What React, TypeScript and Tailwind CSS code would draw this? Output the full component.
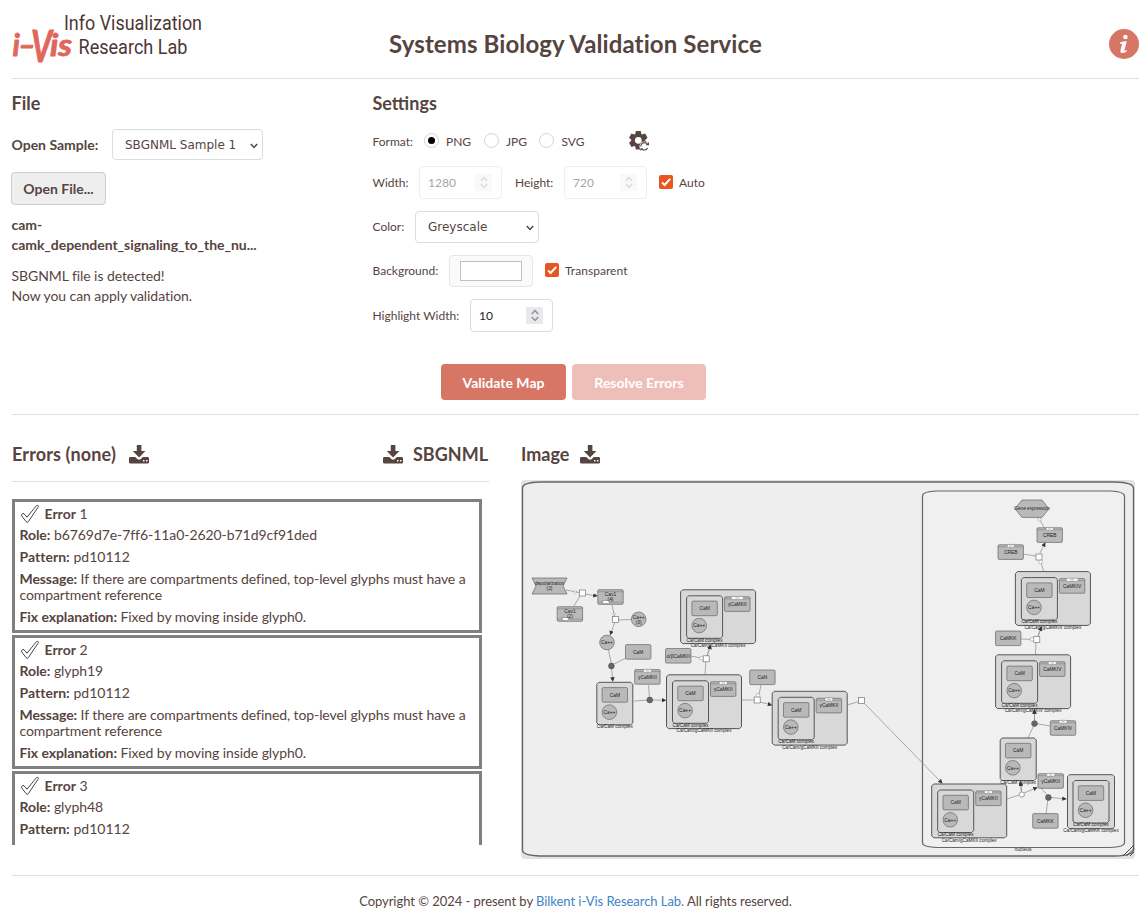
import React from "react";

function Chevron({ className = "" }: { className?: string }) {
  return (
    <svg className={className} width="8" height="6" viewBox="0 0 8 6" fill="none" stroke="currentColor" strokeWidth="1.5">
      <path d="M0.8 1 L4 4.4 L7.2 1" />
    </svg>
  );
}

function Spinner({ dim = false }: { dim?: boolean }) {
  return (
    <span className={`flex h-[17px] w-[17px] flex-col items-center justify-between py-0.5 ${dim ? "bg-[#f9f9f9] text-[#dcdcdf]" : "bg-[#e9e9ed] text-[#8f8f9d]"}`}>
      <Chevron className="rotate-180" />
      <Chevron />
    </span>
  );
}

function NumberField({ value, dim = false }: { value: string; dim?: boolean }) {
  return (
    <div className={`flex h-[33px] w-[83px] items-center justify-between rounded border pr-[9px] pl-2 text-xs ${dim ? "border-[#eeeeee] text-[#a5a5a5]" : "border-[#dcdcdc] text-[#1f1f1f]"}`}>
      <span>{value}</span>
      <Spinner dim={dim} />
    </div>
  );
}

function Radio({ on = false }: { on?: boolean }) {
  return (
    <span className="mb-[3px] flex h-[15px] w-[15px] items-center justify-center rounded-full border border-[#d4d4d5]">
      {on && <span className="h-[7px] w-[7px] rounded-full bg-black" />}
    </span>
  );
}

function Checkbox() {
  return (
    <svg width="14" height="14" viewBox="0 0 14 14" className="mb-0.5 shrink-0">
      <rect width="14" height="14" rx="2" fill="#e95420" />
      <path d="M3 7.4 L5.6 10 L11.2 3.8" fill="none" stroke="#fff" strokeWidth="2" />
    </svg>
  );
}

function DownloadIcon() {
  return (
    <svg width="20" height="19" viewBox="0 0 20 19" fill="#564440">
      <path d="M7.8 0 h4.6 v6 h4 L10.1 12.4 3.8 6 h4z" />
      <path fillRule="evenodd" d="M1.4 12 H6.2 L8.3 14 Q10 15.4 11.8 14 L13.9 12 H18.6 Q20 12 20 13.4 V17.2 Q20 18.6 18.6 18.6 H1.4 Q0 18.6 0 17.2 V13.4 Q0 12 1.4 12z M14 15 v1.6 h1.5 V15z M17 15 v1.6 h1.5 V15z" />
    </svg>
  );
}

function GearIcon() {
  return (
    <svg width="21" height="21" viewBox="0 0 21 21">
      <g fill="#564440">
        {[0, 60, 120].map((a) => (
          <path key={a} d="M6.9 0 H11.7 L12.6 4 V14.6 L11.7 18.6 H6.9 L6 14.6 V4z" transform={`rotate(${a} 9.3 9.3)`} />
        ))}
        <circle cx="9.3" cy="9.3" r="6.8" />
      </g>
      <circle cx="9.3" cy="9.3" r="3.4" fill="#fff" />
      <circle cx="15.5" cy="15.5" r="5" fill="#fff" />
      <path d="M11.7 15.4 A3.8 3.8 0 0 1 18 12.6 M18.6 17 A3.8 3.8 0 0 1 13 18.3" fill="none" stroke="#564440" strokeWidth="1.1" />
      <path d="M16.4 14.2 H20 V11z M11.4 20 V17.2 H14.2z" fill="#564440" />
    </svg>
  );
}

function Logo() {
  return (
    <svg width="200" height="62" viewBox="11 7 200 62" aria-label="i-Vis Info Visualization Research Lab">
      <g fontFamily="Roboto, sans-serif" fontSize="19.5" fill="#4d3633">
        <text x="64" y="30" textLength="138" lengthAdjust="spacingAndGlyphs">Info Visualization</text>
        <text x="78.5" y="53.5" textLength="109" lengthAdjust="spacingAndGlyphs">Research Lab</text>
      </g>
      <g fontFamily="Lato, sans-serif" fontStyle="italic" fontWeight="700" fill="#df675c" stroke="#df675c" strokeWidth="0.9" strokeLinejoin="round">
        <text x="12.5" y="56" fontSize="30">i</text>
        <text x="19" y="54.5" fontSize="29" textLength="16" lengthAdjust="spacingAndGlyphs">-</text>
        <text x="31" y="62" fontSize="44" textLength="21" lengthAdjust="spacingAndGlyphs">V</text>
        <text x="50" y="56" fontSize="30" textLength="22" lengthAdjust="spacingAndGlyphs">is</text>
      </g>
    </svg>
  );
}

type P = { x: number; y: number };

function Label({ x, y, size = 4.9, children }: P & { size?: number; children: React.ReactNode }) {
  return <text x={x} y={y} textAnchor="middle" fontSize={size} fill="#222">{children}</text>;
}

function Node({ x, y, label, sub, tag }: P & { label: string; sub?: string; tag?: number }) {
  return (
    <g>
      <rect x={x} y={y} width="25.4" height="14.6" rx="1.2" fill="#b9b9b9" stroke="#666" strokeWidth="0.7" />
      {tag !== undefined && (
        <g stroke="#777" strokeWidth="0.5">
          <path d={`M${x} ${y + 2} h25.4`} />
          <rect x={x + 12.7 - tag / 2} y={y - 0.4} width={tag} height="3" rx="1" fill="#fff" />
          <path d={`M${x + 11} ${y + 1.1} h3.4`} />
        </g>
      )}
      {sub && (
        <g stroke="#777" strokeWidth="0.5">
          <path d={`M${x} ${y + 2} h25.4 M${x} ${y + 12.4} h25.4`} />
          <rect x={x + 5} y={y + 11} width="6.5" height="2.8" fill="#fff" />
        </g>
      )}
      <Label x={x + 12.7} y={sub ? y + 6.6 : y + 9}>{label}</Label>
      {sub && <Label x={x + 12.7} y={y + 11.6}>{sub}</Label>}
    </g>
  );
}

function Ion({ x, y, sub }: P & { sub?: string }) {
  return (
    <g>
      <circle cx={x} cy={y} r="7.3" fill="#b9b9b9" stroke="#666" strokeWidth="0.7" />
      <Label x={x} y={sub ? y - 0.6 : y + 1.7}>Ca++</Label>
      {sub && <Label x={x} y={y + 4.6}>{sub}</Label>}
    </g>
  );
}

function Frame({ x, y, w, h }: P & { w: number; h: number }) {
  return (
    <path
      d={`M${x + 2} ${y} H${x + w - 2} L${x + w} ${y + 2} V${y + h - 2} L${x + w - 2} ${y + h} H${x + 2} L${x} ${y + h - 2} V${y + 2}z`}
      fill="#d8d8d8"
      stroke="#555"
      strokeWidth="1"
    />
  );
}

function SmallComplex({ x, y }: P) {
  return (
    <g>
      <Frame x={x} y={y} w={36} h={42.5} />
      <Node x={x + 5.3} y={y + 5.3} label="CaM" />
      <Ion x={x + 12.6} y={y + 29.8} />
      <Label x={x + 18} y={y + 45.8} size={4.7}>Ca/CaM complex</Label>
    </g>
  );
}

function BigComplex({ x, y, side, name, tag = 8 }: P & { side: string; name: string; tag?: number }) {
  return (
    <g>
      <Frame x={x} y={y} w={75} h={53.8} />
      <SmallComplex x={x + 6} y={y + 6} />
      <Node x={x + 44} y={y + 7} label={side} tag={tag} />
      <Label x={x + 37.5} y={y + 57.6} size={4.65}>{name}</Label>
    </g>
  );
}

function Square({ x, y }: P) {
  return <rect x={x - 3} y={y - 3} width="6" height="6" fill="#fff" stroke="#777" strokeWidth="0.7" />;
}

function Dot({ x, y }: P) {
  return <circle cx={x} cy={y} r="2.9" fill="#666" stroke="#444" strokeWidth="0.5" />;
}

const ARROWS = [
  "M585 594 L597 596", "M615 622 L610.3 634.5", "M611.6 668 L612.8 681",
  "M652 700 L665.5 700.3", "M707 656 L710.5 645.5", "M760 702 L771.5 705",
  "M863 702 L942 783", "M1040 553 L1045 543", "M1038 636 L1041.5 627",
  "M1034.5 721 L1034.5 710", "M1024 793 L1037 787.5", "M1021.5 792 L1020.5 782", "M1051 797.5 L1066 799",
];

const LINES = [
  "M566 590 L579 592.5", "M574 606 L581 594", "M612 605 L615 618", "M618 620 L632 619.5",
  "M608.5 650 L611.4 664", "M614 664 L626 658", "M634 701 L647 700.2", "M648.5 685 L649.5 698",
  "M690 656 L702 658", "M705.8 661 L705 675", "M741 700 L754 700", "M761 685 L758.5 697",
  "M847 705 L859 701.5", "M1039 518 L1044 527.5", "M1023 554 L1036 556", "M1040 559 L1043.5 571",
  "M1021 639 L1034 639.5", "M1036 642 L1035.4 655", "M1036 723.5 L1050 726", "M1034 725 L1028 738",
  "M1007 799 L1019 795", "M1041 788 L1047 795", "M1048 799 L1046 814",
];

function PathwayMap() {
  return (
    <svg className="block" width="614" height="378" viewBox="521 480 614 378" fontFamily="Liberation Sans, Arial, sans-serif">
      <defs>
        <marker id="tip" viewBox="0 0 6 6" refX="5" refY="3" markerWidth="4.5" markerHeight="4.5" markerUnits="userSpaceOnUse" orient="auto">
          <path d="M0 0 L6 3 L0 6z" fill="#333" />
        </marker>
      </defs>
      <path d="M522.5 488 Q522.5 482.5 540 482 H1115 Q1133 482.5 1133.5 488 V850 Q1133 855.5 1115 856 H540 Q522.5 855.5 522.5 850z" fill="#eee" stroke="#666" strokeWidth="1.4" />
      <path d="M922.5 496 Q922.5 491.5 937 491 H1110 Q1124 491.5 1124.5 496 V843 Q1124 847 1110 847.5 H937 Q923 847 922.5 843z" fill="#f0f0f0" stroke="#666" strokeWidth="1.2" />
      <Label x={1023} y={851}>nucleus</Label>
      <g stroke="#8a8a8a" strokeWidth="0.7" fill="none">
        {LINES.map((d) => <path key={d} d={d} />)}
        {ARROWS.map((d) => <path key={d} d={d} markerEnd="url(#tip)" />)}
      </g>
      <path d="M532 578 H567 L563 586 L567 594 H532 L536 586z" fill="#b9b9b9" stroke="#666" strokeWidth="0.7" />
      <Label x={549.5} y={585} size={4.7}>depolarization</Label>
      <Label x={549.5} y={590}>(2)</Label>
      <Node x={597.8} y={589.7} label="Cav1" sub="(4)" />
      <Node x={557.2} y={606.7} label="Cav1" sub="(2)" />
      <Ion x={638.7} y={619.3} sub="(3)" />
      <Ion x={607} y={642.5} />
      <Node x={625.5} y={644.6} label="CaM" />
      <Node x={634.7} y={669.6} label="γCaMKII" tag={8} />
      <SmallComplex x={596.8} y={682.3} />
      <BigComplex x={680.6} y={589.8} side="γCaMKII" name="Ca/Cam/gCaMKII complex" tag={12} />
      <Node x={665.5} y={648.5} label="α/βCaMKII" />
      <BigComplex x={666.5} y={674.8} side="γCaMKII" name="Ca/Cam/gCaMKII complex" />
      <Node x={749.7} y={670} label="CaN" />
      <BigComplex x={772.2} y={691.3} side="γCaMKII" name="Ca/Cam/gCaMKII complex" />
      <path d="M1015 508.7 L1022 500 H1042 L1049 508.7 L1042 517.4 H1022z" fill="#b9b9b9" stroke="#666" strokeWidth="0.7" />
      <Label x={1032} y={510.3} size={4.7}>Gene expression</Label>
      <Node x={1037} y={527.8} label="CREB" tag={7} />
      <Node x={998} y={544.8} label="CREB" tag={7} />
      <BigComplex x={1015.4} y={571.6} side="CaMKIV" name="Ca/Cam/gCaMKIV complex" tag={12} />
      <Node x={995.5} y={631} label="CaMKK" />
      <BigComplex x={995.6} y={654.8} side="CaMKIV" name="Ca/Cam/gCaMKIV complex" />
      <Node x={1050.3} y={720.7} label="CaMKIV" tag={8} />
      <SmallComplex x={1000.2} y={738} />
      <Node x={1038} y={773.7} label="γCaMKII" tag={8} />
      <BigComplex x={931.7} y={784} side="γCaMKII" name="Ca/Cam/gCaMKII complex" />
      <Node x={1032.7} y={813.6} label="CaMKK" />
      <Frame x={1067.5} y={774.7} w={47} h={54} />
      <SmallComplex x={1073} y={780.5} />
      <Label x={1091} y={832.3} size={4.65}>Ca/Cam/gCaMKK complex</Label>
      <g fill="none" stroke="#8a8a8a" strokeWidth="0.7">
        {ARROWS.filter((_, i) => [4, 8, 9, 11].includes(i)).map((d) => <path key={d} d={d} markerEnd="url(#tip)" />)}
      </g>
      <Square x={582.4} y={593} />
      <Square x={615.5} y={619.6} />
      <Square x={706.2} y={658.8} />
      <Square x={757.2} y={700} />
      <Square x={861.6} y={700.6} />
      <Square x={1039} y={557} />
      <Square x={1036.8} y={639.6} />
      <g fill="#fff" stroke="#999" strokeWidth="0.6">
        <circle cx="575.5" cy="592" r="1.3" />
        <circle cx="614" cy="614" r="1.3" />
        <circle cx="701.3" cy="658.3" r="1.8" />
        <circle cx="758" cy="695.3" r="1.8" />
        <circle cx="1039.7" cy="519.5" r="1.6" />
        <circle cx="1040.5" cy="562" r="1.8" />
        <circle cx="1032" cy="639.3" r="1.8" />
        <circle cx="1021.8" cy="794.6" r="2.6" stroke="#666" />
      </g>
      <Dot x={611.4} y={666} />
      <Dot x={649.8} y={700} />
      <Dot x={1034.5} y={723.6} />
      <Dot x={1048.4} y={797.5} />
      <path d="M1123 856 L1134 845 M1126.5 856 L1134 848.5 M1130 856 L1134 852" stroke="#444" strokeWidth="1" />
    </svg>
  );
}

const ERRORS = [
  { n: 1, role: "b6769d7e-7ff6-11a0-2620-b71d9cf91ded" },
  { n: 2, role: "glyph19" },
  { n: 3, role: "glyph48" },
];

function ErrorCard({ n, role }: { n: number; role: string }) {
  return (
    <div className="flex h-[134px] shrink-0 flex-col gap-1.5 border-[3px] border-[#808080] pt-1 pl-[4.5px] leading-4">
      <div className="-mb-px flex h-4 items-center">
        <svg width="20" height="20" viewBox="0 0 20 20" className="mr-[5px]" fill="none" stroke="#333" strokeWidth="0.9">
          <path d="M1.2 11.2 Q2.2 9 4 9.6 L7 13.2 L16.6 1.5 Q18.2 0.8 18.6 2.4 L8.4 17.6 Q7.2 19 6 17.6z" />
        </svg>
        <span><b>Error</b> {n}</span>
      </div>
      <div className="tracking-[-0.06px]"><b>Role:</b> {role}</div>
      <div className="tracking-[0.03px]"><b>Pattern:</b> pd10112</div>
      <div className="tracking-[-0.09px]"><b>Message:</b> If there are compartments defined, top-level glyphs must have a compartment reference</div>
      <div className="tracking-[-0.07px]"><b>Fix explanation:</b> Fixed by moving inside glyph0.</div>
    </div>
  );
}

function Select({ children, className }: { children: string; className: string }) {
  return (
    <div className={`flex items-center justify-between rounded border border-[#dcdcdc] pr-1 pl-3 font-['DejaVu_Sans',sans-serif] text-xs ${className}`}>
      <span>{children}</span>
      <Chevron className="mt-0.5" />
    </div>
  );
}

export default function App() {
  return (
    <div className="h-[916px] w-[1148px] overflow-hidden bg-white pr-[9px] pl-3 font-[Lato,sans-serif] text-sm text-[#564440]">
      <header className="grid h-[79px] grid-cols-[1fr_auto_1fr] border-b border-[#dededf]">
        <div className="-ml-px pt-[7px]"><Logo /></div>
        <h1 className="pt-[30px] text-2xl leading-7 font-bold tracking-[0.11px]">Systems Biology Validation Service</h1>
        <div className="flex justify-end pt-[29px]">
          <svg width="30" height="30" viewBox="0 0 30 30">
            <circle cx="15" cy="15" r="15" fill="#d77665" />
            <circle cx="16.4" cy="8" r="2.3" fill="#fff" />
            <path d="M11 13.4 Q14 12 17.8 12.2 L15.3 21.6 Q16 22 18 20.8 L17.5 22.5 Q14 24.8 12 23.8 Q11 23 11.5 21 L13.2 14.8 Q12 14.4 10.8 15z" fill="#fff" />
          </svg>
        </div>
      </header>

      <section className="flex h-[285px]">
        <div className="-ml-[0.5px] w-[361px] pt-[13px]">
          <h2 className="text-lg leading-[23px] font-bold">File</h2>
          <div className="mt-3.5 flex items-center">
            <b className="w-[100.5px]">Open Sample:</b>
            <Select className="h-[31px] w-[151px]">SBGNML Sample 1</Select>
          </div>
          <button className="mt-3 -ml-[0.5px] h-[33px] w-[95px] rounded border border-[#cccccc] bg-[#eeeeee] font-bold">Open File...</button>
          <div className="mt-2.5 leading-5 font-bold tracking-[-0.05px]">cam-<br />camk_dependent_signaling_to_the_nu...</div>
          <div className="mt-[11px] leading-5 tracking-[-0.07px]">SBGNML file is detected!<br />Now you can apply validation.</div>
        </div>
        <div className="pt-[13px] text-xs">
          <h2 className="text-lg leading-[23px] font-bold">Settings</h2>
          <div className="mt-2.5 flex h-[34px] items-center">
            <span className="w-[51.5px]">Format:</span>
            <Radio on /><span className="ml-[7px] w-[38px]">PNG</span>
            <Radio /><span className="ml-[7px] w-[33px]">JPG</span>
            <Radio /><span className="ml-[7.5px] w-[67.5px]">SVG</span>
            <span className="mb-0.5"><GearIcon /></span>
          </div>
          <div className="mt-[7px] flex h-[33px] items-center">
            <span className="w-[46.5px]">Width:</span>
            <NumberField value="1280" dim />
            <span className="ml-[13px] w-[49px]">Height:</span>
            <NumberField value="720" dim />
            <span className="w-3" /><Checkbox /><span className="ml-1.5">Auto</span>
          </div>
          <div className="mt-3 flex h-8 items-center">
            <span className="w-[42.5px]">Color:</span>
            <Select className="h-8 w-[124px]">Greyscale</Select>
          </div>
          <div className="mt-3 flex h-8 items-center">
            <span className="w-[76.5px]">Background:</span>
            <div className="flex h-8 w-[84px] items-center justify-center rounded border border-[#e6e6e6] bg-[#fafafa]">
              <span className="h-5 w-[62px] border border-[#c0c0c0] bg-white" />
            </div>
            <span className="w-3" /><Checkbox /><span className="ml-1.5 tracking-[0.05px]">Transparent</span>
          </div>
          <div className="mt-3 flex h-[33px] items-center">
            <span className="w-[97.5px]">Highlight Width:</span>
            <NumberField value="10" />
          </div>
        </div>
      </section>

      <div className="flex h-[51px] gap-1.5 border-b border-[#dededf] pl-[429px] font-bold text-white">
        <button className="h-9 w-[125px] rounded bg-[#d77665] pt-0.5">Validate Map</button>
        <button className="h-9 w-[134px] rounded bg-[#eebfb9] pt-0.5">Resolve Errors</button>
      </div>

      <main className="flex h-[461px] border-b border-[#dededf]">
        <div className="w-[477px]">
          <div className="flex h-[67px] items-center border-b border-[#dededf] pt-3 text-lg font-bold">
            <span className="mr-[13px] tracking-[0.13px]">Errors (none)</span>
            <DownloadIcon />
            <span className="grow" />
            <DownloadIcon />
            <span className="mr-px ml-2.5">SBGNML</span>
          </div>
          <div className="mt-[17px] flex h-[346px] w-[470px] flex-col gap-0.5 overflow-hidden">
            {ERRORS.map((e) => <ErrorCard key={e.n} {...e} />)}
          </div>
        </div>
        <div className="ml-8 w-[614px]">
          <div className="flex h-[65px] items-center gap-[11px] pt-3 text-lg font-bold">
            <span>Image</span>
            <span className="pt-px"><DownloadIcon /></span>
          </div>
          <div className="h-[379px] overflow-hidden rounded bg-[#e2e2e2]"><PathwayMap /></div>
        </div>
      </main>

      <footer className="pt-[15px] text-center text-[13px] leading-5 tracking-[-0.05px]">
        Copyright © 2024 - present by <a className="text-[#4183c4]">Bilkent i-Vis Research Lab.</a> All rights reserved.
      </footer>
    </div>
  );
}
